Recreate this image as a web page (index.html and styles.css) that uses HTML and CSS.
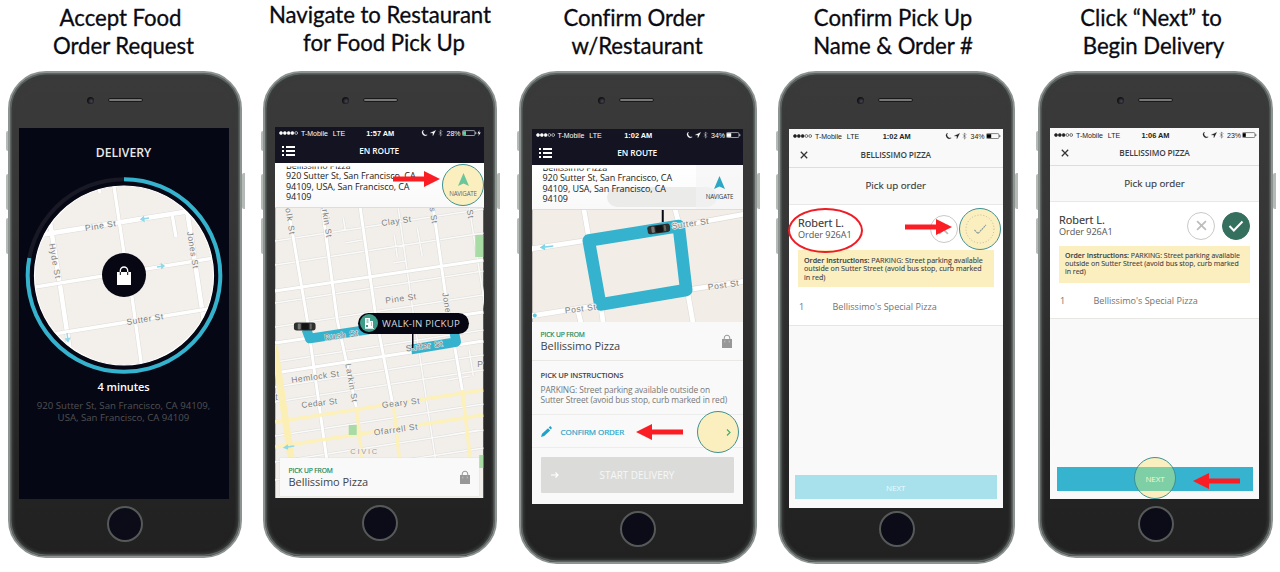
FILE: index.html
```html
<!DOCTYPE html>
<html lang="en">
<head>
<meta charset="utf-8">
<title>Food delivery steps</title>
<link rel="stylesheet" href="styles.css">
</head>
<body>
<svg class="sprite" aria-hidden="true">
  <symbol id="i-dots" viewBox="0 0 19 4"><g stroke="currentColor" stroke-width=".6"><circle cx="2" cy="2" r="1.5" fill="currentColor"/><circle cx="5.8" cy="2" r="1.5" fill="currentColor"/><circle cx="9.6" cy="2" r="1.5" fill="currentColor"/><circle cx="13.4" cy="2" r="1.4" fill="none"/><circle cx="17.2" cy="2" r="1.4" fill="none"/></g></symbol>
  <symbol id="i-dots4" viewBox="0 0 19 4"><g stroke="currentColor" stroke-width=".6"><circle cx="2" cy="2" r="1.5" fill="currentColor"/><circle cx="5.8" cy="2" r="1.5" fill="currentColor"/><circle cx="9.6" cy="2" r="1.5" fill="currentColor"/><circle cx="13.4" cy="2" r="1.5" fill="currentColor"/><circle cx="17.2" cy="2" r="1.4" fill="none"/></g></symbol>
  <symbol id="i-signals" viewBox="0 0 22 8"><path d="M2.4 1A3 3 0 1 0 6.2 6 3.4 3.4 0 0 1 2.4 1z" fill="currentColor" stroke="currentColor" stroke-width=".4"/><path d="M14.6 1.4L9.4 3.9h2.5v2.8z" fill="currentColor" stroke="currentColor" stroke-width=".3"/><path d="M18 2.4l3 3.1-1.6 1.6V.9L21 2.5l-3 3.1" fill="none" stroke="currentColor" stroke-width=".5" opacity=".8"/></symbol>
  <symbol id="i-menu" viewBox="0 0 13 10"><path d="M0 1h2M4 1h9M0 5h2M4 5h9M0 9h2M4 9h9" stroke="#fff" stroke-width="2"/></symbol>
  <symbol id="i-bag" viewBox="0 0 10 14"><path d="M0 5h10v9H0z" fill="#979797"/><path d="M2.2 6V4a2.8 2.8 0 0 1 5.6 0v2" fill="none" stroke="#979797" stroke-width="1"/><path d="M2.8 6.5v2M7.2 6.5v2" stroke="#d0d0d0" stroke-width=".7"/></symbol>
  <symbol id="i-nav" viewBox="0 0 11 13"><path d="M5.5 0L11 13 5.5 10.4 0 13z" fill="currentColor"/></symbol>
  <symbol id="i-x" viewBox="0 0 10 10"><path d="M1 1l8 8M9 1L1 9" stroke="currentColor" stroke-width="1.6" fill="none"/></symbol>
  <symbol id="i-arrow" viewBox="0 0 47 16"><path d="M0 5.5h31V0l16 8-16 8v-5.5H0z" fill="#fb1d24"/></symbol>
  <symbol id="i-car" viewBox="0 0 22 9"><rect x="0" y=".5" width="22" height="8" rx="3" fill="#2e3030"/><rect x="4" y="1.6" width="3" height="5.8" rx="1" fill="#777"/><rect x="8" y="1.2" width="7" height="6.6" rx="1" fill="#121212"/><rect x="16" y="1.6" width="2" height="5.8" rx="1" fill="#666"/></symbol>
</svg>

<main class="board">
  <section class="step">
    <h2 class="caption cap-1"><span>Accept Food</span><span>Order Request</span></h2>
    <div class="phone p1">
      <i class="key k1"></i><i class="key k2"></i><i class="key k3"></i><i class="key k4"></i>
      <div class="forehead"><i class="camera"></i><i class="speaker"></i></div>
      <div class="screen request">
        <h3>DELIVERY</h3>
        <svg class="radar" viewBox="24 176 200 200">
          <clipPath id="disc"><circle cx="124" cy="275.5" r="89.5"/></clipPath>
          <circle cx="124" cy="275.5" r="96.3" fill="none" stroke="#181924" stroke-width="4"/>
          <path d="M124 179.2A96.3 96.3 0 1 1 29.3 258" fill="none" stroke="#35b2cd" stroke-width="4"/>
          <g clip-path="url(#disc)">
            <path d="M30 180h190v190H30z" fill="#f3efea"/>
            <g fill="none" stroke="#dedcd8" stroke-width="5.6"><path d="M34 236L187 211.500M50 222l10 63 12 80M187 210l17 112"/></g>
            <g fill="none" stroke="#fff" stroke-width="4.6"><path d="M34 236L187 211.500M50 222l10 63 12 80M187 210l17 112"/></g>
            <g fill="none" stroke="#dedcd8" stroke-width="4.4"><path d="M113 180l12 80 7 37 10 72M30 288l190-31M48 335l166-27M172 214l4 23M98 180l2 13"/></g>
            <g fill="none" stroke="#fff" stroke-width="3.4"><path d="M113 180l12 80 7 37 10 72M30 288l190-31M48 335l166-27M172 214l4 23M98 180l2 13M34 236L187 211.500"/></g>
            <g class="road halo">
              <text transform="translate(85.500 231) rotate(-9)" textLength="31">Pine St</text>
              <text transform="translate(49 244) rotate(80)" textLength="35">Hyde St</text>
              <text transform="translate(187 232) rotate(81)" textLength="37">Jones St</text>
              <text transform="translate(127 325) rotate(-9)" textLength="37">Sutter St</text>
            </g>
            <g stroke="#8fd9ea" stroke-width="1.400" fill="#8fd9ea"><path d="M149 218l-8 1.300m2.500-2.300l-2.500 2.300 3 1.700zM157 267l7-1m-2.500-1.800l2.500 1.800-2.200 2zM67 333l1 8m-2-2l2 2.500 1.500-3z"/></g>
          </g>
          <circle cx="124" cy="275.500" r="89.500" fill="none" stroke="#fff" stroke-width="1.200"/>
          <circle cx="124" cy="275" r="22" fill="#060713"/>
          <path d="M117 272h14v13h-14z" fill="#fff"/>
          <path d="M120.300 274v-3.300a3.700 3.700 0 0 1 7.400 0v3.300" fill="none" stroke="#fff" stroke-width="1.300"/>
          <path d="M120.300 272v3M127.700 272v3" stroke="#060713" stroke-width="1"/>
        </svg>
        <p class="eta">4 minutes</p>
        <p class="dest">920 Sutter St, San Francisco, CA 94109,<br>USA, San Francisco, CA 94109</p>
      </div>
      <div class="chin"><i class="home"></i></div>
    </div>
  </section>

  <section class="step">
    <h2 class="caption cap-2"><span>Navigate to Restaurant</span><span>for Food Pick Up</span></h2>
    <div class="phone p2">
      <i class="key k1"></i><i class="key k2"></i><i class="key k3"></i><i class="key k4"></i>
      <div class="forehead"><i class="camera"></i><i class="speaker"></i></div>
      <div class="screen enroute">
        <div class="status light">
          <div class="carrier"><svg class="dots"><use href="#i-dots4"/></svg><span>T-Mobile</span><span>LTE</span></div>
          <b>1:57 AM</b>
          <div class="power"><svg class="signals"><use href="#i-signals"/></svg><span>28%</span>
            <svg class="battery" viewBox="0 0 20 6"><rect x=".4" y=".6" width="12.500" height="4.900" rx="1" fill="none" stroke="#cfd6d6" stroke-width=".7"/><path d="M1 1.200h3v3.700H1z" fill="#53d89a"/><path d="M13.800 2.200v1.800" stroke="#ccc"/><path d="M17.500 0L15.500 3.400h1.500L16.300 6l2.500-3.500h-1.700z" fill="#fff"/></svg></div>
        </div>
        <div class="navbar"><svg class="menu"><use href="#i-menu"/></svg><span>EN ROUTE</span></div>
        <div class="address">
          <p><span class="cut">Bellissimo Pizza</span>920 Sutter St, San Francisco, CA<br>94109, USA, San Francisco, CA<br>94109</p>
        </div>
        <div class="mapbox">
          <svg class="map" viewBox="276 208 208 290">
            <path d="M276 208h208v290H276z" fill="#f2eee9"/>
            <g fill="none" stroke="#dddfde" stroke-width="2.600"><path d="M276 241l208-32M276 265l208-32M276 303l208-32M276 327l208-32M276 362l208-32M276 387l208-32M276 402l208-32M276 436l208-32M276 462l208-32M276 480l208-32M399 208l15 105 22 145M470 208l16 100M344 218l2 12h-4M395 235l3 22M418 228l5 28M346 243l17-3M394 263l12-2M470 350l4 26M448 380l22-4M450 435l30-5"/></g>
            <g fill="none" stroke="#fbfaf8" stroke-width="1.600"><path d="M276 241l208-32M276 265l208-32M276 303l208-32M276 327l208-32M276 362l208-32M276 387l208-32M276 402l208-32M276 436l208-32M276 462l208-32M276 480l208-32M399 208l15 105 22 145M470 208l16 100M344 218l2 12h-4M395 235l3 22M418 228l5 28M346 243l17-3M394 263l12-2M470 350l4 26M448 380l22-4M450 435l30-5"/></g>
            <g fill="none" stroke="#dcdcda" stroke-width="4"><path d="M276 291l208-31M276 343l208-31M276 373l208-32M289 208l19 112 21 150M323 208l15 112 19 87M361 208l15 105 18 94M434 208l12 85 17 97"/></g>
            <g fill="none" stroke="#fff" stroke-width="3"><path d="M276 291l208-31M276 343l208-31M276 373l208-32M289 208l19 112 21 150M323 208l15 112 19 87M361 208l15 105 18 94M434 208l12 85 17 97"/></g>
            <g fill="none" stroke="#fcf0bb" stroke-width="3.500"><path d="M276 422l208-32M276 447l208-32M357 407l6 52M394 402l6 56M463 390l8 68"/></g>
            <path d="M275 345l17 114" stroke="#fcefb6" stroke-width="7"/>
            <g fill="#a9dba5"><path d="M476 235h8v22h-8zM349.500 425h8v10h-8zM480 455h4v13h-4z"/></g>
            <path d="M307 329l3.500 9.500 59-9M452 318l5 24-45 7.500" fill="none" stroke="#35b2cd" stroke-width="9.500" stroke-linejoin="round"/>
            <g class="road halo">
              <text transform="translate(382.500 226) rotate(-8)" textLength="30">Clay St</text>
              <text transform="translate(386.500 303.500) rotate(-8)" textLength="31">Pine St</text>
              <text transform="translate(407 351.500) rotate(-8)" textLength="37" class="on-route">Sutter St</text>
              <text transform="translate(325.500 340.500) rotate(-8)" textLength="34" class="on-route">Bush St</text>
              <text transform="translate(292.500 383) rotate(-8)" textLength="48">Hemlock St</text>
              <text transform="translate(302.500 408) rotate(-7)" textLength="36">Cedar St</text>
              <text transform="translate(383 408) rotate(-7)" textLength="38">Geary St</text>
              <text transform="translate(375 435.500) rotate(-8)" textLength="44">Ofarrell St</text>
              <text transform="translate(285 202) rotate(81)" textLength="33">Polk St</text>
              <text transform="translate(321 199) rotate(81)" textLength="39">Larkin St</text>
              <text transform="translate(346 364) rotate(80)" textLength="39">Larkin St</text>
              <text transform="translate(427 188) rotate(81)" textLength="36">Jones St</text>
              <text transform="translate(463 182) rotate(81)" textLength="37">Taylor St</text>
              <text transform="translate(443 293) rotate(81)" textLength="37">Jones St</text>
              <text x="478" y="367">P</text><text x="276" y="400">t</text>
              <text class="area" x="351" y="454" textLength="27">CIVIC</text>
            </g>
            <path d="M295 446l-10 1.500m3-2l-3 2 3.200 1.200z" stroke="#8fd9ea" stroke-width="1.400" fill="#8fd9ea"/>
            <path d="M413.500 333v15" stroke="#060713" stroke-width="1.500"/>
            <use href="#i-car" x="294.500" y="322" width="22" height="9"/>
          </svg>
          <div class="pill"><svg viewBox="0 0 18 18"><circle cx="9" cy="9" r="9" fill="#3d9b88"/><path d="M5 4h5v3h3v7h1v.7H5zM6 13h2v-2H6z" fill="#fff"/><path d="M11 9h1M11 11h1M6.500 6h2M6.500 8h2" stroke="#3d9b88"/></svg><span>WALK-IN PICKUP</span></div>
          <div class="pickup"><div><small>PICK UP FROM</small><strong>Bellissimo Pizza</strong></div><svg class="bag"><use href="#i-bag"/></svg></div>
        </div>
        <div class="spot nav-spot"><svg><use href="#i-nav"/></svg><span>NAVIGATE</span></div>
        <svg class="arrow a2"><use href="#i-arrow"/></svg>
      </div>
      <div class="chin"><i class="home"></i></div>
    </div>
  </section>

  <section class="step">
    <h2 class="caption cap-3"><span>Confirm Order</span><span>w/Restaurant</span></h2>
    <div class="phone p3 tall">
      <i class="key k1"></i><i class="key k2"></i><i class="key k3"></i><i class="key k4"></i>
      <div class="forehead"><i class="camera"></i><i class="speaker"></i></div>
      <div class="screen enroute">
        <div class="status light">
          <div class="carrier"><svg class="dots"><use href="#i-dots"/></svg><span>T-Mobile</span><span>LTE</span></div>
          <b>1:02 AM</b>
          <div class="power"><svg class="signals"><use href="#i-signals"/></svg><span>34%</span>
            <svg class="battery" viewBox="0 0 15 6"><rect x=".4" y=".6" width="12.500" height="4.900" rx="1" fill="none" stroke="#cfd6d6" stroke-width=".7"/><path d="M1 1.200h4.200v3.700H1z" fill="#fff"/><path d="M13.800 2.200v1.800" stroke="#ccc"/></svg></div>
        </div>
        <div class="navbar"><svg class="menu"><use href="#i-menu"/></svg><span>EN ROUTE</span></div>
        <div class="address">
          <i class="ghost"></i>
          <p><span class="cut">Bellissimo Pizza</span>920 Sutter St, San Francisco, CA<br>94109, USA, San Francisco, CA<br>94109</p>
          <div class="go"><svg><use href="#i-nav"/></svg><span>NAVIGATE</span></div>
        </div>
        <svg class="map block-map" viewBox="532 210 211 112">
          <path d="M532 210h211v112H532z" fill="#f2eee7"/>
          <g fill="none" stroke="#dedcd8" stroke-width="6"><path d="M530 249l59-9M583 206l6 34M674 206l5 19M679 226l66-12M530 316l70-11M600 300l3 24M686 290l59-9M687 290l6 34M577 308l4 16"/></g>
          <g fill="none" stroke="#fff" stroke-width="4.800"><path d="M530 249l59-9M583 206l6 34M674 206l5 19M679 226l66-12M530 316l70-11M600 300l3 24M686 290l59-9M687 290l6 34M577 308l4 16"/></g>
          <path d="M588.500 240.500l90-14.500 7.500 64-86 14.500z" fill="none" stroke="#35b2cd" stroke-width="12.500" stroke-linejoin="round"/>
          <g class="road halo">
            <text transform="translate(672 229) rotate(-8)" textLength="37">Sutter St</text>
            <text transform="translate(708 290) rotate(-8)" textLength="31">Post St</text>
            <text transform="translate(565 313.500) rotate(-7)" textLength="31">Post St</text>
          </g>
          <path d="M553 246l-12 1.500m3-2l-3 2 3 1.500zM536 315l-2 .5" stroke="#7fd4e8" stroke-width="1.600" fill="#7fd4e8"/><circle cx="534.500" cy="315.500" r="2" fill="#5fc7df"/>
          <path d="M662.500 210v12" stroke="#060713" stroke-width="2"/>
          <use href="#i-car" x="647" y="224" width="23" height="10" transform="rotate(-8 658 229)"/>
        </svg>
        <div class="sheet">
          <div class="pickup"><div><small>PICK UP FROM</small><strong>Bellissimo Pizza</strong></div><svg class="bag"><use href="#i-bag"/></svg></div>
          <div class="notes"><h4>PICK UP INSTRUCTIONS</h4><p>PARKING: Street parking available outside on<br>Sutter Street (avoid bus stop, curb marked in red)</p></div>
          <div class="confirm"><svg viewBox="0 0 11 11"><path d="M0 11l1-3.200 6-5.600 2.200 2.200-6 5.700zM7.700 1.500L9.200 0 11 2 9.700 3.600z" fill="#1fa3c8"/></svg><span>CONFIRM ORDER</span></div>
          <div class="start"><svg viewBox="0 0 8 6"><path d="M0 3h7M4.500.5L7 3 4.500 5.500" fill="none" stroke="#fff" stroke-width="1.200"/></svg><span>START DELIVERY</span></div>
        </div>
        <div class="spot confirm-spot"><svg viewBox="0 0 5 7"><path d="M1 .5l3 3-3 3" fill="none" stroke="#45ad6c" stroke-width="1.200"/></svg></div>
        <svg class="arrow a3"><use href="#i-arrow"/></svg>
      </div>
      <div class="chin"><i class="home"></i></div>
    </div>
  </section>

  <section class="step">
    <h2 class="caption cap-4"><span>Confirm Pick Up</span><span>Name &amp; Order #</span></h2>
    <div class="phone p4 tall">
      <i class="key k1"></i><i class="key k2"></i><i class="key k3"></i><i class="key k4"></i>
      <div class="forehead"><i class="camera"></i><i class="speaker"></i></div>
      <div class="screen order">
        <div class="status">
          <div class="carrier"><svg class="dots"><use href="#i-dots"/></svg><span>T-Mobile</span><span>LTE</span></div>
          <b>1:02 AM</b>
          <div class="power"><svg class="signals"><use href="#i-signals"/></svg><span>34%</span>
            <svg class="battery" viewBox="0 0 15 6"><rect x=".4" y=".6" width="12.500" height="4.900" rx="1" fill="none" stroke="#555" stroke-width=".7"/><path d="M1 1.200h4.200v3.700H1z" fill="#000"/><path d="M13.800 2.200v1.800" stroke="#555"/></svg></div>
        </div>
        <div class="navbar"><svg class="close"><use href="#i-x"/></svg><span>BELLISSIMO PIZZA</span></div>
        <div class="section-title">Pick up order</div>
        <div class="details">
          <div class="customer"><div><strong>Robert L.</strong><span>Order 926A1</span></div>
            <i class="round"><svg><use href="#i-x"/></svg></i></div>
          <p class="instructions"><b>Order Instructions:</b> PARKING: Street parking available<br>outside on Sutter Street (avoid bus stop, curb marked<br>in red)</p>
          <div class="item"><span>1</span><span>Bellissimo's Special Pizza</span></div>
        </div>
        <div class="footer"><div class="next">NEXT</div></div>
        <div class="spot check-spot"><svg viewBox="0 0 30 30"><circle cx="15" cy="15" r="14" fill="none" stroke="#a9aa94" stroke-width=".8" stroke-dasharray="1 2"/><path d="M9.500 16l3.500 3.500L21 11" fill="none" stroke="#86979a" stroke-width="1.100" stroke-dasharray="2 .6"/></svg></div>
        <svg class="arrow a4"><use href="#i-arrow"/></svg>
        <i class="lasso"></i>
      </div>
      <div class="chin"><i class="home"></i></div>
    </div>
  </section>

  <section class="step">
    <h2 class="caption cap-5"><span>Click “Next” to</span><span>Begin Delivery</span></h2>
    <div class="phone p5">
      <i class="key k1"></i><i class="key k2"></i><i class="key k3"></i><i class="key k4"></i>
      <div class="forehead"><i class="camera"></i><i class="speaker"></i></div>
      <div class="screen order">
        <div class="status">
          <div class="carrier"><svg class="dots"><use href="#i-dots"/></svg><span>T-Mobile</span><span>LTE</span></div>
          <b>1:06 AM</b>
          <div class="power"><svg class="signals"><use href="#i-signals"/></svg><span>23%</span>
            <svg class="battery" viewBox="0 0 15 6"><rect x=".4" y=".6" width="12.500" height="4.900" rx="1" fill="none" stroke="#555" stroke-width=".7"/><path d="M1 1.200h2.800v3.700H1z" fill="#000"/><path d="M13.800 2.200v1.800" stroke="#555"/></svg></div>
        </div>
        <div class="navbar"><svg class="close"><use href="#i-x"/></svg><span>BELLISSIMO PIZZA</span></div>
        <div class="section-title">Pick up order</div>
        <div class="details">
          <div class="customer"><div><strong>Robert L.</strong><span>Order 926A1</span></div>
            <i class="round"><svg><use href="#i-x"/></svg></i>
            <i class="round done"><svg viewBox="0 0 16 12"><path d="M1.500 6l4.300 4.500L14.500 1.500" fill="none" stroke="#fff" stroke-width="2"/></svg></i></div>
          <p class="instructions"><b>Order Instructions:</b> PARKING: Street parking available<br>outside on Sutter Street (avoid bus stop, curb marked<br>in red)</p>
          <div class="item"><span>1</span><span>Bellissimo's Special Pizza</span></div>
        </div>
        <div class="footer"><div class="next"></div></div>
        <div class="spot next-spot"><span>NEXT</span></div>
        <svg class="arrow a5"><use href="#i-arrow"/></svg>
      </div>
      <div class="chin"><i class="home"></i></div>
    </div>
  </section>
</main>
</body>
</html>
```

FILE: styles.css
```css
* { box-sizing: border-box; }
body { margin: 0; background: #fff; width: 1280px; height: 572px; overflow: hidden; font-family: "Open Sans", "Noto Sans", sans-serif; }
h2, h3, h4, p { margin: 0; }
svg { display: block; overflow: hidden; }
.sprite { width: 0; height: 0; position: absolute; }

.board { display: flex; }
.step { width: 256px; flex: none; }
.caption { height: 70.500px; font: 400 22.200px/28px Lato, sans-serif; letter-spacing: -.05px; color: #0a0a12; text-align: center; white-space: nowrap; -webkit-text-stroke: .3px #0a0a12; }
.caption span { display: block; }
.cap-1 { padding: 4px 15px 0 0; }
.cap-1 span + span { padding-left: 6px; }
.cap-2 { padding: 1px 8px 0 0; }
.cap-2 span + span { padding-left: 8px; }
.cap-3 { padding: 4px 12px 0 0; }
.cap-3 span + span { padding-left: 6px; }
.cap-4 { padding: 4px 6px 0 0; }
.cap-5 { padding: 4px 2px 0 0; }
.cap-5 span + span { padding-left: 5px; }

/* handset */
.phone { position: relative; display: flex; flex-direction: column; width: 234px; height: 487px; border-radius: 38px; border: 2.500px solid #8d9391; background: linear-gradient(#3a3a3a, #363636 30%, #242424 80%, #212121); box-shadow: inset 0 0 0 1.500px #5d6462, inset 0 0 3px 3px #3a3e3d; }
.p1 { margin-left: 8px; }
.p2 { margin-left: 7px; }
.p3 { margin-left: 7px; width: 238px; }
.p4 { margin-left: 10px; width: 237px; }
.p5 { margin-left: 14px; width: 235px; }
.tall { height: 493.500px; }
.forehead { flex: none; height: 55px; display: flex; align-items: center; padding: 0 0 0 76.500px; gap: 14px; }
.camera { width: 7px; height: 7px; border-radius: 50%; background: radial-gradient(circle at 60% 60%, #484858, #111 60%); }
.speaker { width: 35px; height: 4px; border-radius: 2px; background: #777; border: 1px solid #191919; }
.screen { position: relative; flex: none; display: flex; flex-direction: column; overflow: visible; }
.chin { flex: 1; display: flex; justify-content: center; align-items: flex-start; padding-top: 7px; }
.home { width: 36px; height: 36px; border-radius: 50%; border: 2px solid #555958; background: #0c0c18; }
.key { position: absolute; width: 3px; height: 36px; left: -4.500px; background: #b4bab6; border-radius: 2px 0 0 2px; z-index: -1; }
.k1 { top: 58px; height: 20px; }
.k2 { top: 101px; }
.k3 { top: 145px; }
.k4 { top: 100px; left: auto; right: -5px; }

.p1 .screen { width: 210px; height: 371.500px; margin-left: 8.500px; }
.p2 .screen { width: 208.500px; height: 371px; margin-left: 10px; margin-top: -1px; }
.p3 .screen { width: 211.500px; height: 375px; margin-left: 10.500px; margin-top: 1px; }
.p4 .screen { width: 213.500px; height: 379.500px; margin-left: 9px; margin-top: 1px; }
.p5 .screen { width: 209px; height: 371px; margin-left: 10px; }
.p4 .chin { padding-top: 3px; }

/* incoming request */
.request { background: #060714; align-items: center; color: #fff; text-align: center; }
.request h3 { padding-top: 16px; font-size: 12.200px; line-height: 17px; font-weight: 600; color: #e9e9ea; }
.radar { width: 200px; height: 200px; margin-top: 15px; }
.eta { font-size: 11px; line-height: 16px; margin-top: 3px; font-weight: 600; letter-spacing: -.1px; }
.dest { font-size: 9.650px; line-height: 12.500px; margin-top: 5px; color: #505153; white-space: nowrap; }
.road { font-family: "Liberation Sans", Arial, sans-serif; font-size: 8.500px; fill: #7c8080; }
.halo text { paint-order: stroke; stroke: #f6f3ef; stroke-width: 1.500px; }
.halo .on-route { stroke-width: 1px; stroke: #dfeef0; }
.road .area { font-size: 7.500px; fill: #9a9d9d; }

/* status and title bars */
.status { flex: none; display: grid; grid-template-columns: 1fr auto 1fr; align-items: center; height: 13px; padding: 0 2px 0 4px; font: 7px/13px "Liberation Sans", Arial, sans-serif; color: #222; }
.status b { font-size: 7.400px; font-weight: 600; }
.carrier, .power { display: flex; align-items: center; }
.carrier { gap: 3px; }
.carrier span + span { margin-left: 2px; }
.power { justify-content: flex-end; }
.dots { width: 19px; height: 4px; }
.signals { width: 22px; height: 8px; margin-right: 3px; }
.battery { width: 15px; height: 6px; margin-left: 1px; }
.p2 .battery { width: 20px; }
.light { color: #fff; background: #131321; }
.navbar { flex: none; height: 23px; display: grid; grid-template-columns: 1fr auto 1fr; align-items: center; font-size: 8.300px; font-weight: 600; line-height: 12px; }
.enroute .navbar { background: #131321; color: #fff; letter-spacing: -.1px; }
.menu { width: 13px; height: 10px; margin-left: 7px; }
.enroute .status { height: 12px; }
.enroute .navbar { height: 24px; }

.address { position: relative; flex: none; height: 45px; background: linear-gradient(#fff, #f9f9f9); overflow: hidden; display: flex; justify-content: space-between; border-bottom: 1px solid #ddd; }
.address p { position: relative; font-size: 9px; line-height: 10.500px; color: #222; padding: 8.800px 0 0 11px; white-space: nowrap; letter-spacing: -.07px; }
.cut { position: absolute; top: -2px; left: 11px; height: 10px; line-height: 10px; clip-path: inset(6px 0 0 0); }
.go { position: relative; width: 47px; display: flex; flex-direction: column; align-items: center; padding: 11px 0 0; color: #2ca7c4; background: rgba(243, 243, 243, .6); }
.go svg, .nav-spot svg { width: 11px; height: 13px; }
.go span, .nav-spot span { font-size: 6.200px; line-height: 8px; margin-top: 4px; color: #333a42; letter-spacing: -.2px; }
.ghost { position: absolute; left: 75px; top: 22px; width: 110px; height: 20px; border-radius: 10px; background: #ebebea; }
.mapbox { position: relative; flex: 1; overflow: hidden; display: flex; flex-direction: column; justify-content: flex-end; }
.mapbox .map { position: absolute; inset: 0; width: 208.500px; height: 290px; }
.block-map { width: 211.500px; height: 112px; flex: none; }
.pill { position: absolute; left: 82.500px; top: 105px; width: 111px; height: 21.500px; border-radius: 11px; background: #060713; display: flex; align-items: center; gap: 4.500px; padding-left: 2px; color: #d5d7d8; font-size: 9.700px; white-space: nowrap; letter-spacing: .2px; }
.pill svg { width: 18px; height: 18px; }
.pickup { position: relative; display: flex; justify-content: space-between; align-items: center; background: #f9f9f9; }
.pickup small { display: block; font-size: 6.700px; line-height: 9px; color: #128046; letter-spacing: -.1px; -webkit-text-stroke: .15px #128046; }
.pickup strong { display: block; font-size: 11px; line-height: 13px; font-weight: 400; color: #444; letter-spacing: -.05px; }
.mapbox .pickup { margin: 0 5px 2px; height: 38px; padding: 0 9px 0 8.500px; box-shadow: 0 0 1px #ccc; }
.bag { width: 10px; height: 14px; }

/* confirm sheet */
.sheet { flex: 1; background: #f9f9f9; display: flex; flex-direction: column; }
.sheet .pickup { height: 39px; padding: 0 11px 0 9px; border-bottom: 1px solid #e9e8e4; }
.notes { height: 54.500px; padding: 9px 0 0 9px; border-bottom: 1px solid #ececea; white-space: nowrap; }
.notes h4 { font-size: 7.700px; line-height: 10px; font-weight: 600; color: #444; letter-spacing: -.2px; }
.notes p { font-size: 8.400px; line-height: 10.600px; color: #777; margin-top: 5px; letter-spacing: -.12px; }
.confirm { height: 33px; display: flex; align-items: center; gap: 9px; padding-left: 9px; border-bottom: 1px solid #eeeee8; color: #1fa3c8; font-size: 8px; letter-spacing: -.05px; -webkit-text-stroke: .2px #1fa3c8; }
.confirm svg { width: 11px; height: 11px; }
.start { margin: 8.500px 9.500px 0 9px; height: 36.500px; background: #dbdcda; border-radius: 1px; display: grid; grid-template-columns: 1fr auto 1fr; align-items: center; color: #f6f7f7; font-size: 9.900px; }
.start svg { width: 8px; height: 6px; margin-left: 10px; }

/* order review */
.order { background: #f9f9f9; color: #3c3f42; }
.order .navbar { height: 25px; border-bottom: 1px solid #dedede; letter-spacing: -.12px; }
.order .status { padding-top: 1px; height: 13px; }
.p4 .status { height: 14px; }
.close { width: 8px; height: 8px; margin-left: 11px; color: #333; }
.section-title { flex: none; height: 36px; display: grid; place-items: center; font-size: 9.800px; font-weight: 500; border-bottom: 1px solid #e8e8e8; color: #3a3c40; -webkit-text-stroke: .15px #3a3c40; }
.details { flex: none; background: #fff; border-bottom: 1px solid #e6e6e2; height: 117px; padding: 0 9px; }
.customer { height: 44px; display: flex; align-items: center; gap: 7px; padding: 4px 0 0; }
.customer div { flex: 1; padding-bottom: 1px; }
.customer strong { display: block; font-size: 10.900px; line-height: 12px; font-weight: 500; color: #333; -webkit-text-stroke: .15px #333; }
.customer span { display: block; font-size: 9.100px; line-height: 11px; color: #555; letter-spacing: -.05px; }
.round { width: 28px; height: 28px; border-radius: 50%; border: 1px solid #c9c9c7; display: grid; place-items: center; color: #bdbdbb; }
.round svg { width: 11px; height: 11px; }
.done { background: #35705f; border-color: #35705f; }
.done svg { width: 16px; height: 12px; }
.instructions { height: 37px; background: #fcefbf; font-size: 6.980px; line-height: 8.200px; padding: 6px 0 0 6px; color: #3d4146; white-space: nowrap; -webkit-text-stroke: .1px #3d4146; }
.instructions b { font-weight: 600; }
.item { display: flex; font-size: 9.050px; line-height: 12px; color: #73736f; padding: 12.500px 0 0 1px; }
.item span:first-child { width: 33.500px; }
.footer { flex: 1; display: flex; align-items: flex-end; padding: 0 6.500px 8px; }
.next { flex: 1; height: 24px; background: #36b3cf; display: grid; place-items: center; font-size: 8px; color: #fff; }
.p4 .section-title { height: 37px; }
.p4 .next { background: #a8e1ec; border-top: 1px solid #c6d5d8; color: #edfafc; }
.p4 .footer { padding: 0 6px 9px; }
.p4 .details { height: 121px; }
.p4 .customer { height: 45px; padding-right: 36px; padding-top: 4px; }
.p4 .item { padding-top: 13.500px; }
.p4 .instructions { height: 37.500px; font-size: 7.130px; line-height: 8.500px; }

/* callouts */
.spot { position: absolute; width: 42px; height: 42px; border-radius: 50%; border: 1.500px solid #3f9191; background: #fcefbf; display: flex; flex-direction: column; align-items: center; justify-content: center; }
.nav-spot { left: 167px; top: 37px; color: #6dc59b; padding-top: 2px; }
.nav-spot span { color: #5d6474; }
.confirm-spot { left: 165.500px; top: 282.500px; }
.confirm-spot svg { width: 5px; height: 7px; margin-left: 21px; }
.check-spot { left: 170px; top: 79.500px; }
.check-spot svg { width: 30px; height: 30px; }
.next-spot { left: 84px; top: 329.500px; background: linear-gradient(#fcefbf 9.500px, #7fcfa6 9.500px 33px, #fcefbf 33px); color: #f8f4c4; font-size: 8px; letter-spacing: -.1px; }
.arrow { position: absolute; width: 47px; height: 16px; }
.a2 { left: 117.500px; top: 44.500px; }
.a3 { left: 104px; top: 295px; transform: scaleX(-1); }
.a4 { left: 116px; top: 90px; }
.a5 { left: 143px; top: 345px; transform: scaleX(-1); }
.lasso { position: absolute; left: -1px; top: 79px; width: 75px; height: 45.500px; border: 2px solid #ee1c24; border-radius: 50%; }
```
